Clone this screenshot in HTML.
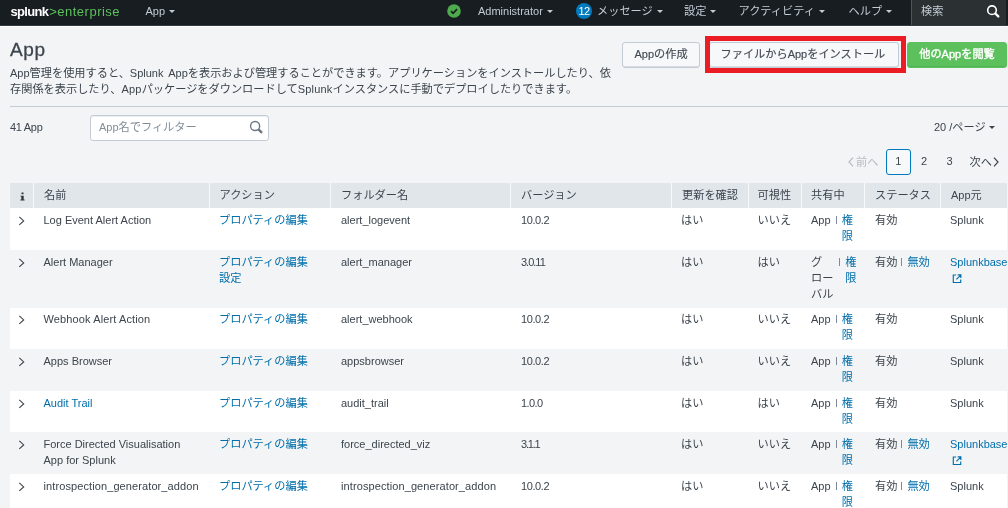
<!DOCTYPE html><html lang="ja"><head><meta charset="utf-8"><title>App - Splunk</title><style>
*{box-sizing:border-box;margin:0;padding:0}
html,body{width:1008px;height:508px;overflow:hidden}
body{position:relative;background:#f2f4f5;font-family:"Liberation Sans",sans-serif;font-size:11px;line-height:16px;color:#3c444d}
.j{font-family:"Liberation Sans","Noto Sans CJK JP",sans-serif;font-size:11.2px;letter-spacing:0}
#w{position:absolute;left:0;top:0;width:1008px;height:508px;overflow:hidden;will-change:transform}
.a{position:absolute;white-space:nowrap}
a{color:#006eaa;text-decoration:none}
#nav{position:absolute;left:0;top:0;width:1008px;height:25px;background:#171d21;color:#c3cbd4;box-shadow:0 1px 0 #343b40,0 2px 0 #fdfdfe}
#nav .n{position:absolute;white-space:nowrap;top:0;line-height:22px;height:25px}
.car{display:inline-block;width:0;height:0;border-left:3px solid transparent;border-right:3px solid transparent;border-top:3.8px solid currentColor;vertical-align:1.6px;margin-left:4px}
.btn{position:absolute;top:42px;height:26px;border:1px solid #c3cbd4;border-radius:3px;background:#f7f8fa;line-height:23px;text-align:center;white-space:nowrap;box-shadow:inset 0 -1px 0 #d7dde3}
.med{-webkit-text-stroke:0.3px currentColor}
.btn.med{-webkit-text-stroke:0.15px currentColor;color:#414a54}
table{position:absolute;left:10px;top:183px;width:997px;border-collapse:separate;border-spacing:0;table-layout:fixed}
th{height:25px;background:#e1e6eb;border-right:1px solid #f7f8fa;text-align:left;font-weight:normal;padding:0 0 0 10px;vertical-align:top;line-height:25px;white-space:nowrap;overflow:hidden}
th:last-child{border-right:0}
td{vertical-align:top;padding:4px 0 0 10px;line-height:16px;white-space:nowrap;overflow:hidden}
tr.o td{background:#fff}
tr.up td{padding-top:3px}

.sep{display:inline-block;width:1px;height:8px;background:#7f8a96;vertical-align:0;margin:0 5.2px 0 5px}
.sep.s2{margin-left:3.8px}
.chev{display:block;margin:4px 0 0 -2.5px}
th:nth-child(3){padding-left:9.5px}
td:nth-child(2){padding-left:9.5px}
td:nth-child(3){padding-left:9px}
td:nth-child(7),th:nth-child(7),td:nth-child(8),th:nth-child(8){padding-left:9px}
td:nth-child(5){letter-spacing:-.4px}
td:nth-child(10){padding-left:9px}
td:nth-child(6) .j{margin-left:-1px}
</style></head><body><div id="w">
<div id="nav">
 <div class="n" style="left:10.5px;font-size:13px;letter-spacing:.5px;line-height:23px"><b style="color:#fff;letter-spacing:-.7px">splunk</b><span style="color:#5cc05c;margin-left:1px">&gt;enterprise</span></div>
 <div class="n" style="left:145.5px">App<span class="car"></span></div>
 <svg class="a" style="left:447px;top:4px" width="14" height="14" viewBox="0 0 14 14"><circle cx="7" cy="7" r="6.8" fill="#4fa94d"/><path d="M4 7.2l2.1 2.1L10 5.2" fill="none" stroke="#171d21" stroke-width="1.7"/></svg>
 <div class="n" style="left:478px">Administrator<span class="car"></span></div>
 <div class="n" style="left:576px;top:2.5px;width:16px;height:16px;line-height:16px;border-radius:8px;background:#007abd;color:#fff;text-align:center;letter-spacing:-.5px;font-size:11px">12</div>
 <div class="n" style="left:597px"><span class="j">メッセージ</span><span class="car"></span></div>
 <div class="n" style="left:684px"><span class="j">設定</span><span class="car"></span></div>
 <div class="n" style="left:738.5px"><span class="j">アクティビティ</span><span class="car"></span></div>
 <div class="n" style="left:848.5px"><span class="j">ヘルプ</span><span class="car"></span></div>
 <div class="n" style="left:910.5px;width:95px;height:25px;background:#2b3033;border-left:1px solid #4a545c"></div>
 <div class="n" style="left:921px"><span class="j">検索</span></div>
 <svg class="a" style="left:985px;top:3px" width="18" height="18" viewBox="0 0 18 18"><circle cx="7" cy="7.2" r="4.3" fill="none" stroke="#fff" stroke-width="1.6"/><path d="M10.3 10.5l3 2.9" stroke="#fff" stroke-width="2.4" stroke-linecap="round"/></svg>
</div>

<div class="a med" style="left:10px;top:37px;font-size:19px;line-height:26px;letter-spacing:.6px">App</div>
<div class="a" style="left:10px;top:65.25px;word-spacing:2.3px">App<span class="j">管理を使用すると、</span>Splunk App<span class="j">を表示および管理することができます。アプリケーションをインストールしたり、依</span><br><span style="letter-spacing:.2px;word-spacing:0"><span class="j">存関係を表示したり、</span>App<span class="j">パッケージをダウンロードして</span>Splunk<span class="j">インスタンスに手動でデプロイしたりできます。</span></span></div>
<div class="btn med" style="left:622px;width:78px">App<span class="j">の作成</span></div>
<div class="btn med" style="left:709px;width:190px;text-align:left;padding-left:10.5px"><span class="j">ファイルから</span>App<span class="j">をインストール</span></div>
<div class="a" style="left:705.3px;top:36.4px;width:200.7px;height:36.3px;border:5px solid #ec1c24"></div>
<div class="btn" style="left:907px;width:100px;background:#5cc05c;border-color:#5cc05c;color:#fff;box-shadow:inset 0 -1px 0 #50b250;-webkit-text-stroke:0.35px #fff"><span class="j">他の</span>App<span class="j">を閲覧</span></div>
<div class="a" style="left:10px;top:106px;width:998px;height:1px;background:#c3cbd4"></div>
<div class="a" style="left:10px;top:118.75px;letter-spacing:-.3px">41 App</div>
<div class="a" style="left:90px;top:115px;width:178.5px;height:26px;border:1px solid #c3cbd4;border-radius:3px;background:#fff;box-shadow:inset 0 1px 0 #eceef0"></div>
<div class="a" style="left:99px;top:118.75px;color:#818d99">App<span class="j">名でフィルター</span></div>
<svg class="a" style="left:248px;top:117.5px" width="18" height="18" viewBox="0 0 18 18"><circle cx="7.1" cy="8" r="4.55" fill="none" stroke="#6b7785" stroke-width="1.4"/><path d="M10.5 11.4l3.5 3.4" stroke="#6b7785" stroke-width="2.5"/></svg>
<div class="a" style="left:934px;top:119px">20 /<span class="j">ページ</span><span class="car" style="margin-left:3px"></span></div>
<div class="a" style="left:848px;top:153.5px;color:#b3bbc3"><svg width="6" height="10" viewBox="0 0 6 10" style="vertical-align:-1.5px;margin-right:2px"><path d="M5 .7L1 5l4 4.3" fill="none" stroke="currentColor" stroke-width="1.2"/></svg><span class="j">前へ</span></div>
<div class="a" style="left:886px;top:149px;width:24.5px;height:25.5px;border:1px solid #007abd;border-radius:3px;background:#f7f8fa;text-align:center;line-height:16px;padding-top:3px">1</div>
<div class="a" style="left:921px;top:153px">2</div>
<div class="a" style="left:946.5px;top:153px">3</div>
<div class="a" style="left:969.5px;top:153.5px"><span class="j">次へ</span><svg width="6" height="10" viewBox="0 0 6 10" style="vertical-align:-1.5px;margin-left:1.5px"><path d="M1 .7L5 5 1 9.3" fill="none" stroke="currentColor" stroke-width="1.2"/></svg></div>
<table><colgroup><col style="width:24px"><col style="width:176px"><col style="width:121px"><col style="width:180px"><col style="width:161px"><col style="width:76.5px"><col style="width:53.5px"><col style="width:63px"><col style="width:76px"><col style="width:66px"></colgroup><tr><th><svg style="display:block;margin:8.5px 0 0 -.5px" width="5" height="9" viewBox="0 0 5 9"><path fill="#2f363d" d="M1.5.5h2v1.7h-2zM.4 3.7h3.3v3.8h.9v1H.4v-1h.9V4.6H.4z"/></svg></th><th><span class="j">名前</span></th><th><span class="j">アクション</span></th><th><span class="j">フォルダー名</span></th><th><span class="j">バージョン</span></th><th><span class="j">更新を確認</span></th><th><span class="j">可視性</span></th><th><span class="j">共有中</span></th><th><span class="j">ステータス</span></th><th>App<span class="j">元</span></th></tr><tr class="o" style="height:42px"><td><svg class="chev" width="8" height="10" viewBox="0 0 8 10"><path d="M1.3 .9l4.4 4-4.4 4" fill="none" stroke="#3c444d" stroke-width="1.1"/></svg></td><td>Log Event Alert Action</td><td><a><span class="j">プロパティの編集</span></a></td><td>alert_logevent</td><td>10.0.2</td><td><span class="j">はい</span></td><td><span class="j">いいえ</span></td><td>App<span class="sep"></span><span style="display:inline-block;vertical-align:top;width:11.2px;white-space:normal;line-height:16px"><a><span class="j">権</span><br><span class="j">限</span></a></span></td><td><span class="j">有効</span></td><td>Splunk</td></tr><tr class="e" style="height:58px"><td><svg class="chev" width="8" height="10" viewBox="0 0 8 10"><path d="M1.3 .9l4.4 4-4.4 4" fill="none" stroke="#3c444d" stroke-width="1.1"/></svg></td><td>Alert Manager</td><td><a><span class="j">プロパティの編集</span></a><br><a><span class="j">設定</span></a></td><td>alert_manager</td><td><span style="letter-spacing:-1px">3.0.11</span></td><td><span class="j">はい</span></td><td><span class="j">はい</span></td><td><span style="display:inline-block;vertical-align:top;line-height:16px"><span class="j">グ</span><br><span class="j">ロー</span><br><span class="j">バル</span></span><span style="display:inline-block;width:.7px"></span><span class="sep"></span><span style="display:inline-block;vertical-align:top;width:11.2px;white-space:normal;line-height:16px"><a><span class="j">権</span><br><span class="j">限</span></a></span></td><td><span class="j">有効</span><span class="sep s2"></span><a><span class="j">無効</span></a></td><td><a>Splunkbase</a><svg style="display:block;margin-top:3.5px;margin-left:1.7px" width="10" height="9.5" viewBox="0 0 11 11"><path d="M4.5 1.2H1.2v8.6h8.6V6.5M6.3 1h3.7v3.7M9.8 1.2L4.8 6.2" fill="none" stroke="#006eaa" stroke-width="1.3"/></svg></td></tr><tr class="o up" style="height:41px"><td><svg class="chev" width="8" height="10" viewBox="0 0 8 10"><path d="M1.3 .9l4.4 4-4.4 4" fill="none" stroke="#3c444d" stroke-width="1.1"/></svg></td><td><span style="letter-spacing:.12px">Webhook Alert Action</span></td><td><a><span class="j">プロパティの編集</span></a></td><td>alert_webhook</td><td>10.0.2</td><td><span class="j">はい</span></td><td><span class="j">いいえ</span></td><td>App<span class="sep"></span><span style="display:inline-block;vertical-align:top;width:11.2px;white-space:normal;line-height:16px"><a><span class="j">権</span><br><span class="j">限</span></a></span></td><td><span class="j">有効</span></td><td>Splunk</td></tr><tr class="e" style="height:42px"><td><svg class="chev" width="8" height="10" viewBox="0 0 8 10"><path d="M1.3 .9l4.4 4-4.4 4" fill="none" stroke="#3c444d" stroke-width="1.1"/></svg></td><td>Apps Browser</td><td><a><span class="j">プロパティの編集</span></a></td><td>appsbrowser</td><td>10.0.2</td><td><span class="j">はい</span></td><td><span class="j">いいえ</span></td><td>App<span class="sep"></span><span style="display:inline-block;vertical-align:top;width:11.2px;white-space:normal;line-height:16px"><a><span class="j">権</span><br><span class="j">限</span></a></span></td><td><span class="j">有効</span></td><td>Splunk</td></tr><tr class="o" style="height:41px"><td><svg class="chev" width="8" height="10" viewBox="0 0 8 10"><path d="M1.3 .9l4.4 4-4.4 4" fill="none" stroke="#3c444d" stroke-width="1.1"/></svg></td><td><a>Audit Trail</a></td><td><a><span class="j">プロパティの編集</span></a></td><td>audit_trail</td><td><span style="letter-spacing:-.6px">1.0.0</span></td><td><span class="j">はい</span></td><td><span class="j">はい</span></td><td>App<span class="sep"></span><span style="display:inline-block;vertical-align:top;width:11.2px;white-space:normal;line-height:16px"><a><span class="j">権</span><br><span class="j">限</span></a></span></td><td><span class="j">有効</span></td><td>Splunk</td></tr><tr class="e" style="height:42px"><td><svg class="chev" width="8" height="10" viewBox="0 0 8 10"><path d="M1.3 .9l4.4 4-4.4 4" fill="none" stroke="#3c444d" stroke-width="1.1"/></svg></td><td>Force Directed Visualisation<br>App for Splunk</td><td><a><span class="j">プロパティの編集</span></a></td><td>force_directed_viz</td><td><span style="letter-spacing:-1.2px">3.1.1</span></td><td><span class="j">はい</span></td><td><span class="j">いいえ</span></td><td>App<span class="sep"></span><span style="display:inline-block;vertical-align:top;width:11.2px;white-space:normal;line-height:16px"><a><span class="j">権</span><br><span class="j">限</span></a></span></td><td><span class="j">有効</span><span class="sep s2"></span><a><span class="j">無効</span></a></td><td><a>Splunkbase</a><svg style="display:block;margin-top:3.5px;margin-left:1.7px" width="10" height="9.5" viewBox="0 0 11 11"><path d="M4.5 1.2H1.2v8.6h8.6V6.5M6.3 1h3.7v3.7M9.8 1.2L4.8 6.2" fill="none" stroke="#006eaa" stroke-width="1.3"/></svg></td></tr><tr class="o" style="height:42px"><td><svg class="chev" width="8" height="10" viewBox="0 0 8 10"><path d="M1.3 .9l4.4 4-4.4 4" fill="none" stroke="#3c444d" stroke-width="1.1"/></svg></td><td><span style="letter-spacing:.1px">introspection_generator_addon</span></td><td><a><span class="j">プロパティの編集</span></a></td><td><span style="letter-spacing:.1px">introspection_generator_addon</span></td><td>10.0.2</td><td><span class="j">はい</span></td><td><span class="j">いいえ</span></td><td>App<span class="sep"></span><span style="display:inline-block;vertical-align:top;width:11.2px;white-space:normal;line-height:16px"><a><span class="j">権</span><br><span class="j">限</span></a></span></td><td><span class="j">有効</span><span class="sep s2"></span><a><span class="j">無効</span></a></td><td>Splunk</td></tr></table></div></body></html>
